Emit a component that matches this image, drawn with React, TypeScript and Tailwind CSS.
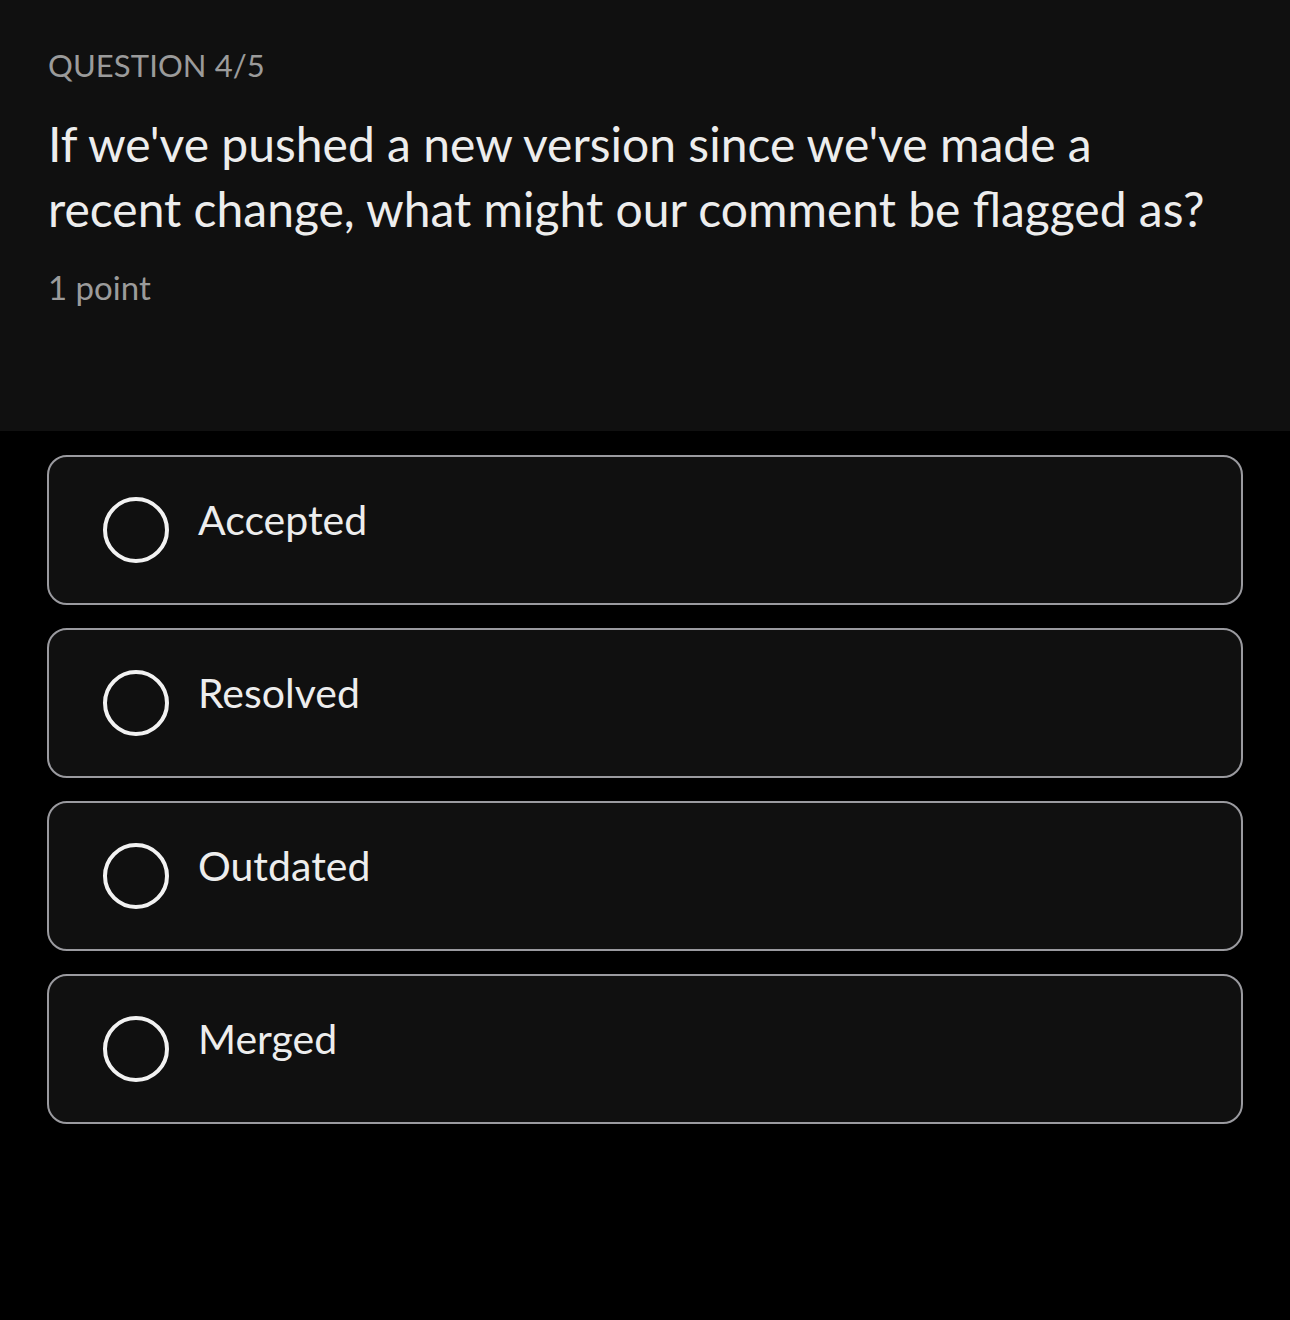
import React, { useState } from 'react';

const options = ['Accepted', 'Resolved', 'Outdated', 'Merged'];

const Radio: React.FC<{ checked: boolean }> = ({ checked }) => (
  <span className="flex h-[66px] w-[66px] shrink-0 items-center justify-center rounded-full border-[4px] border-[#f2f2f2]">
    {checked && <span className="h-[34px] w-[34px] rounded-full bg-[#f2f2f2]" />}
  </span>
);

export default function App() {
  const [picked, setPicked] = useState<number | null>(null);

  return (
    <div
      className="min-h-[1320px] w-full bg-black"
      style={{ fontFamily: 'Lato, "Noto Sans", sans-serif' }}
    >
      {/* Question header */}
      <div className="h-[431px] bg-[#101010] px-[48px] pt-[45px]">
        <p className="text-[31px] leading-[40px] tracking-[0.1px] text-[#9b9b9b]">QUESTION 4/5</p>
        <h1 className="mt-[26px] text-[48px] leading-[65px] text-[#ededed]">
          If we've pushed a new version since we've made a
          <br />
          recent change, what might our comment be flagged as?
        </h1>
        <p className="mt-[26px] text-[33px] leading-[40px] text-[#9b9b9b]">1 point</p>
      </div>

      {/* Answer options */}
      <div className="flex flex-col gap-[23px] px-[47px] pt-[24px]">
        {options.map((opt, i) => (
          <button
            key={opt}
            type="button"
            onClick={() => setPicked(i)}
            className="flex h-[150px] items-center gap-[29px] rounded-[20px] border-[2px] border-[#9a9a9f] bg-[#101010] pl-[54px] text-left"
          >
            <Radio checked={picked === i} />
            <span className="-mt-[20px] text-[41px] text-[#ededed]">{opt}</span>
          </button>
        ))}
      </div>
    </div>
  );
}
